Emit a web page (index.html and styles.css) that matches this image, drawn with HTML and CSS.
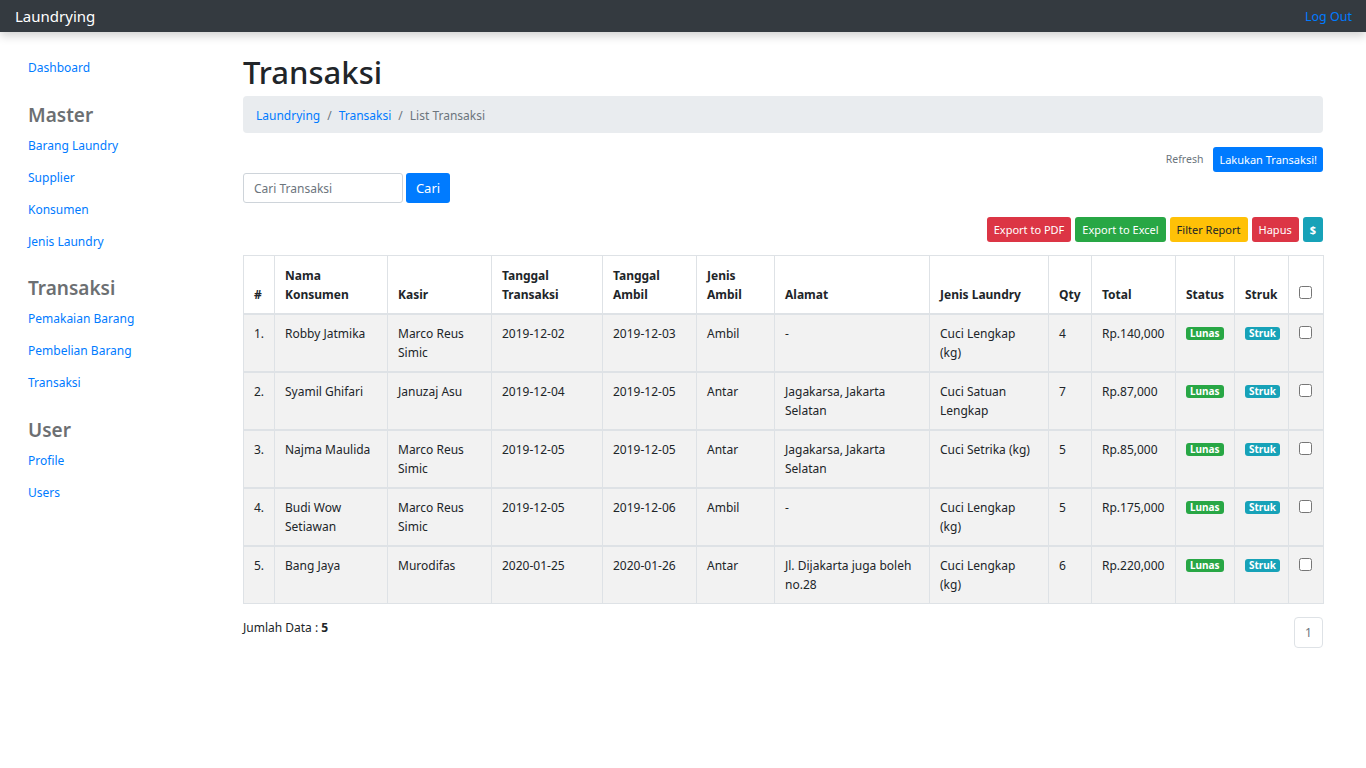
FILE: index.html
```html
<!DOCTYPE html>
<html lang="id">
<head>
<meta charset="utf-8">
<title>Laundrying - Transaksi</title>
<link rel="stylesheet" href="styles.css">
</head>
<body>
<nav class="navbar">
  <a class="brand" href="#">Laundrying</a>
  <a class="logout" href="#">Log Out</a>
</nav>
<div class="layout">
  <aside class="sidebar">
    <a class="side-link" href="#">Dashboard</a>
    <h3 class="side-head">Master</h3>
    <a class="side-link" href="#">Barang Laundry</a>
    <a class="side-link" href="#">Supplier</a>
    <a class="side-link" href="#">Konsumen</a>
    <a class="side-link" href="#">Jenis Laundry</a>
    <h3 class="side-head">Transaksi</h3>
    <a class="side-link" href="#">Pemakaian Barang</a>
    <a class="side-link" href="#">Pembelian Barang</a>
    <a class="side-link" href="#">Transaksi</a>
    <h3 class="side-head">User</h3>
    <a class="side-link" href="#">Profile</a>
    <a class="side-link" href="#">Users</a>
  </aside>
  <main class="main">
    <h1 class="title">Transaksi</h1>
    <ol class="breadcrumb">
      <li><a href="#">Laundrying</a></li>
      <li class="sep">/</li>
      <li><a href="#">Transaksi</a></li>
      <li class="sep">/</li>
      <li class="active">List Transaksi</li>
    </ol>
    <div class="top-actions">
      <a class="refresh" href="#">Refresh</a>
      <button class="btn btn-blue">Lakukan Transaksi!</button>
    </div>
    <form class="search">
      <input class="search-input" type="text" placeholder="Cari Transaksi">
      <button class="btn-cari" type="button">Cari</button>
    </form>
    <div class="report-actions">
      <button class="btn btn-red">Export to PDF</button>
      <button class="btn btn-green">Export to Excel</button>
      <button class="btn btn-yellow">Filter Report</button>
      <button class="btn btn-red">Hapus</button>
      <button class="btn btn-teal">$</button>
    </div>
    <table class="table">
      <colgroup>
        <col class="c-no"><col class="c-nama"><col class="c-kasir"><col class="c-tgl"><col class="c-ambil"><col class="c-jenis"><col class="c-alamat"><col class="c-laundry"><col class="c-qty"><col class="c-total"><col class="c-status"><col class="c-struk"><col class="c-check">
      </colgroup>
      <thead>
        <tr>
          <th>#</th><th>Nama Konsumen</th><th>Kasir</th><th>Tanggal Transaksi</th><th>Tanggal Ambil</th><th>Jenis Ambil</th><th>Alamat</th><th>Jenis Laundry</th><th>Qty</th><th>Total</th><th>Status</th><th>Struk</th><th><input type="checkbox"></th>
        </tr>
      </thead>
      <tbody>
        <tr>
          <td>1.</td><td>Robby Jatmika</td><td>Marco Reus Simic</td><td>2019-12-02</td><td>2019-12-03</td><td>Ambil</td><td>-</td><td>Cuci Lengkap (kg)</td><td>4</td><td>Rp.140,000</td><td><span class="badge b-green">Lunas</span></td><td><span class="badge b-teal">Struk</span></td><td><input type="checkbox"></td>
        </tr>
        <tr>
          <td>2.</td><td>Syamil Ghifari</td><td>Januzaj Asu</td><td>2019-12-04</td><td>2019-12-05</td><td>Antar</td><td>Jagakarsa, Jakarta Selatan</td><td>Cuci Satuan Lengkap</td><td>7</td><td>Rp.87,000</td><td><span class="badge b-green">Lunas</span></td><td><span class="badge b-teal">Struk</span></td><td><input type="checkbox"></td>
        </tr>
        <tr>
          <td>3.</td><td>Najma Maulida</td><td>Marco Reus Simic</td><td>2019-12-05</td><td>2019-12-05</td><td>Antar</td><td>Jagakarsa, Jakarta Selatan</td><td>Cuci Setrika (kg)</td><td>5</td><td>Rp.85,000</td><td><span class="badge b-green">Lunas</span></td><td><span class="badge b-teal">Struk</span></td><td><input type="checkbox"></td>
        </tr>
        <tr>
          <td>4.</td><td>Budi Wow Setiawan</td><td>Marco Reus Simic</td><td>2019-12-05</td><td>2019-12-06</td><td>Ambil</td><td>-</td><td>Cuci Lengkap (kg)</td><td>5</td><td>Rp.175,000</td><td><span class="badge b-green">Lunas</span></td><td><span class="badge b-teal">Struk</span></td><td><input type="checkbox"></td>
        </tr>
        <tr>
          <td>5.</td><td>Bang Jaya</td><td>Murodifas</td><td>2020-01-25</td><td>2020-01-26</td><td>Antar</td><td>Jl. Dijakarta juga boleh no.28</td><td>Cuci Lengkap (kg)</td><td>6</td><td>Rp.220,000</td><td><span class="badge b-green">Lunas</span></td><td><span class="badge b-teal">Struk</span></td><td><input type="checkbox"></td>
        </tr>
      </tbody>
    </table>
    <div class="table-footer">
      <p class="count">Jumlah Data : <b>5</b></p>
      <ul class="pagination"><li class="page">1</li></ul>
    </div>
  </main>
</div>
</body>
</html>
```
FILE: styles.css
```css
* { box-sizing: border-box; }
html, body { margin: 0; padding: 0; }
body {
  font-family: "Noto Sans", "Open Sans", "Liberation Sans", sans-serif;
  font-size: 12px;
  line-height: 19px;
  color: #212529;
  background: #fff;
}
a { color: #007bff; text-decoration: none; }

.navbar {
  height: 32px;
  background: #343a40;
  display: flex;
  align-items: center;
  justify-content: space-between;
  padding: 0 14px 0 15px;
  box-shadow: 0 4px 10px rgba(0,0,0,0.18);
  position: relative;
  z-index: 2;
}
.brand { color: #fff; font-size: 15px; }
.logout { color: #007bff; font-size: 12.5px; }

.layout { display: flex; }
.sidebar {
  width: 243px;
  flex: none;
  padding: 20px 0 0 28px;
  display: flex;
  flex-direction: column;
  align-items: flex-start;
}
.side-link {
  display: block;
  height: 32px;
  line-height: 32px;
  font-size: 12px;
}
.side-head {
  margin: 18.5px 0 3px;
  font-size: 19px;
  line-height: 24px;
  font-weight: 600;
  color: #6c6f72;
}

.main { width: 1080px; padding-top: 20px; }
.title {
  margin: 0 0 4px;
  font-size: 31px;
  line-height: 40px;
  font-weight: 500;
  color: #212529;
}
.breadcrumb {
  list-style: none;
  margin: 0;
  height: 37px;
  padding: 1px 13px 0;
  background: #e9ecef;
  border-radius: 4px;
  display: flex;
  align-items: center;
  gap: 7px;
}
.breadcrumb .sep, .breadcrumb .active { color: #6c757d; }

.top-actions {
  margin-top: 14px;
  display: flex;
  justify-content: flex-end;
  align-items: center;
  gap: 10px;
}
.refresh { color: #6c757d; font-size: 10.5px; }

.btn {
  font-family: inherit;
  font-size: 11px;
  line-height: 17px;
  height: 25px;
  padding: 3px 6px;
  border: 1px solid transparent;
  border-radius: 3px;
  color: #fff;
  cursor: pointer;
}
.btn-blue { background: #007bff; padding: 3px 5px; }
.btn-red { background: #dc3545; }
.btn-green { background: #28a745; }
.btn-yellow { background: #ffc107; color: #212529; }
.btn-teal { background: #17a2b8; font-weight: 700; }

.search { margin: 1px 0 0; display: flex; gap: 3px; }
.search-input {
  width: 160px;
  height: 30px;
  padding: 4px 10px;
  font-family: inherit;
  font-size: 12px;
  color: #495057;
  border: 1px solid #ced4da;
  border-radius: 3px;
}
.search-input::placeholder { color: #6c757d; }
.btn-cari {
  height: 30px;
  width: 44px;
  font-family: inherit;
  font-size: 13px;
  border: none;
  border-radius: 3px;
  background: #007bff;
  color: #fff;
}

.report-actions {
  margin-top: 14px;
  display: flex;
  justify-content: flex-end;
  gap: 4px;
}

.table {
  margin-top: 13px;
  width: 1080px;
  border-collapse: collapse;
  table-layout: fixed;
  border: 1px solid #dee2e6;
}
.c-no { width: 31px; }
.c-nama { width: 113px; }
.c-kasir { width: 104px; }
.c-tgl { width: 111px; }
.c-ambil { width: 94px; }
.c-jenis { width: 78px; }
.c-alamat { width: 155px; }
.c-laundry { width: 119px; }
.c-qty { width: 43px; }
.c-total { width: 84px; }
.c-status { width: 59px; }
.c-struk { width: 54px; }
.c-check { width: 35px; }

.table th, .table td {
  border: 1px solid #dee2e6;
  padding: 9px 10px;
  text-align: left;
}
.table th {
  height: 58px;
  vertical-align: bottom;
  font-weight: 700;
  border-bottom: 2px solid #dee2e6;
  background: #fff;
}
.table td {
  height: 58px;
  vertical-align: top;
  background: #f2f2f2;
  border-bottom: 2px solid #dee2e6;
}
.table tr:last-child td { border-bottom: 1px solid #dee2e6; }
.table input[type=checkbox] { margin: 2px 0 0; width: 13px; height: 13px; }
.table th input[type=checkbox] { margin: 0 0 3px; }

.badge {
  display: inline-block;
  font-size: 10px;
  line-height: 13px;
  font-weight: 700;
  color: #fff;
  padding: 0 4px;
  border-radius: 3px;
  vertical-align: 1px;
}
.b-green { background: #28a745; }
.b-teal { background: #17a2b8; }

.table-footer {
  margin-top: 13px;
  display: flex;
  justify-content: space-between;
  align-items: flex-start;
}
.count { margin: 1px 0 0; }
.pagination { list-style: none; margin: 0; padding: 0; display: flex; }
.page {
  width: 29px;
  height: 31px;
  line-height: 29px;
  text-align: center;
  border: 1px solid #dee2e6;
  border-radius: 4px;
  color: #6c757d;
  font-size: 12px;
}
```
